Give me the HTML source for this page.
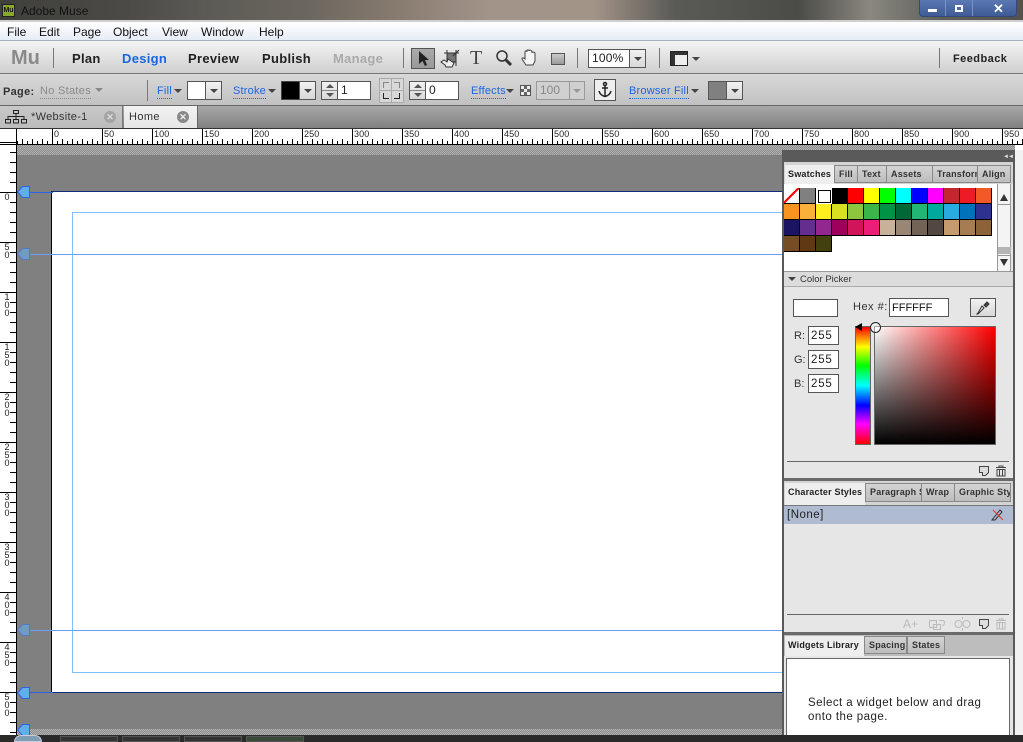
<!DOCTYPE html>
<html><head><meta charset="utf-8"><style>
html,body{margin:0;padding:0;background:#808080}
#r{position:relative;width:1023px;height:742px;overflow:hidden;font-family:"Liberation Sans",sans-serif;font-size:11px;color:#222}
#r div,#r span.a,#r svg{position:absolute;box-sizing:border-box}
.t{white-space:nowrap}
.b{font-weight:bold;font-size:13px;letter-spacing:.3px;top:51px;color:#222}
.lnk{color:#1a66e0;border-bottom:1px dotted #1a66e0;top:85px;line-height:13px;letter-spacing:.2px;white-space:nowrap}
.f{background:#fff;border:1px solid #555}
.dd{background:linear-gradient(#f2f2f2,#d8d8d8);border:1px solid #555}
.tri{width:0;height:0;border-left:4px solid transparent;border-right:4px solid transparent;border-top:4px solid #444}
.up{width:0;height:0;border-left:4px solid transparent;border-right:4px solid transparent;border-bottom:4px solid #555}
.dn{width:0;height:0;border-left:4px solid transparent;border-right:4px solid transparent;border-top:4px solid #555}
.sep{width:1px;background:#777}
.hl{font-size:9px;top:129px;line-height:10px;color:#222;letter-spacing:.1px}
.vl{font-size:9px;left:2px;width:10px;line-height:8px;color:#222;text-align:center}
.tab{background:linear-gradient(#d4d4d4,#bdbdbd);border:1px solid #888;font-size:9px;font-weight:bold;line-height:17px;white-space:nowrap;overflow:hidden;letter-spacing:.2px;padding-left:4px;color:#333}
.on{background:#eee;border-color:#eee;border-bottom:0;color:#222;padding-left:2px}
.s{width:16px;height:16px;border-right:1px solid #000;border-bottom:1px solid #000}
</style></head><body><div id="r">
<!-- title bar -->
<div style="left:0;top:0;width:1023px;height:21px;background:linear-gradient(90deg,#3f3f3b 0,#4b4a46 12%,#5c5a55 20%,#6b675f 30%,#85796d 38%,#a3948a 48%,#a39488 58%,#5a5a56 66%,#4b4b48 78%,#8a887e 85%,#5f5f5c 92%,#55524e 100%)"></div>
<div style="left:0;top:20px;width:1023px;height:2px;background:#cfcfcf"></div>
<div style="left:2px;top:4px;width:13px;height:13px;background:#8aa82a;border:1px solid #222;font-size:7px;line-height:11px;text-align:center;color:#111;font-weight:bold">Mu</div>
<div class="t" style="left:21px;top:4px;font-size:12px;color:#111;line-height:14px">Adobe Muse</div>
<div style="left:919px;top:0;width:98px;height:17px;background:linear-gradient(#5a78b4,#3f5b96);border:1px solid #34487a;border-top:0;border-radius:0 0 4px 4px"></div>
<div style="left:945px;top:0;width:1px;height:16px;background:#7a93c4"></div>
<div style="left:972px;top:0;width:1px;height:16px;background:#7a93c4"></div>
<div style="left:928px;top:9px;width:9px;height:3px;background:#fff"></div>
<div style="left:955px;top:5px;width:8px;height:7px;border:2px solid #fff"></div>
<div class="t" style="left:993px;top:1px;font-size:13px;font-weight:bold;color:#fff;line-height:15px">✕</div>
<!-- menu -->
<div style="left:0;top:22px;width:1023px;height:19px;background:linear-gradient(#fff,#e6ecf6);border-bottom:1px solid #a8b0bc"></div>
<div class="t" style="left:7px;top:25px;font-size:12px;line-height:14px;color:#111">File</div>
<div class="t" style="left:39px;top:25px;font-size:12px;line-height:14px;color:#111">Edit</div>
<div class="t" style="left:73px;top:25px;font-size:12px;line-height:14px;color:#111">Page</div>
<div class="t" style="left:113px;top:25px;font-size:12px;line-height:14px;color:#111">Object</div>
<div class="t" style="left:162px;top:25px;font-size:12px;line-height:14px;color:#111">View</div>
<div class="t" style="left:201px;top:25px;font-size:12px;line-height:14px;color:#111">Window</div>
<div class="t" style="left:259px;top:25px;font-size:12px;line-height:14px;color:#111">Help</div>
<!-- toolbar -->
<div style="left:0;top:41px;width:1023px;height:33px;background:linear-gradient(#f4f4f4,#cfcfcf);border-bottom:1px solid #777"></div>
<div class="t" style="left:11px;top:47px;font-size:20px;font-weight:bold;color:#8a8a8a;line-height:22px">Mu</div>
<div class="sep" style="left:53px;top:48px;height:20px"></div>
<div class="t b" style="left:72px">Plan</div>
<div class="t b" style="left:122px;color:#1a66e0">Design</div>
<div class="t b" style="left:188px">Preview</div>
<div class="t b" style="left:262px">Publish</div>
<div class="t b" style="left:333px;color:#aaa">Manage</div>
<div class="sep" style="left:403px;top:48px;height:20px"></div>
<div style="left:411px;top:48px;width:24px;height:21px;background:linear-gradient(#aaa,#999);border:1px solid #555"></div>
<svg style="left:418px;top:50px" width="12" height="17"><path d="M1 1V14L4.500 11L7 16L9 15L7 10H11Z" fill="#222"/></svg>
<svg style="left:440px;top:49px" width="20" height="20" fill="none" stroke="#333"><rect x="7" y="4" width="9" height="9" fill="#777"/><path d="M4 4H19M16 1V17M7 1V4M19 1L13 7" /><path d="M1 13L5 16L6 18H12L14 14L8 10L7 13L4 11Z" fill="#eee"/></svg>
<div class="t" style="left:470px;top:48px;font-family:'Liberation Serif',serif;font-size:20px;color:#444;line-height:21px">T</div>
<svg style="left:495px;top:49px" width="18" height="18" fill="none" stroke="#333"><circle cx="7" cy="7" r="5" stroke-width="1.500"/><path d="M11 11L16 16" stroke-width="3"/></svg>
<svg style="left:521px;top:49px" width="19" height="19" fill="#f4f4f4" stroke="#444"><path d="M5 16L1 10C1 8 3 9 4 10V3C4 1.500 6 1.500 6 3V2C6 .5 8 .5 8 2V2C8 .5 11 1 11 3V4C11 2.500 14 3 14 4.500V12L12 16Z"/></svg>
<div style="left:551px;top:53px;width:14px;height:12px;background:linear-gradient(#ccc,#999);border:1px solid #555"></div>
<div class="sep" style="left:577px;top:48px;height:20px"></div>
<div class="f" style="left:588px;top:49px;width:42px;height:19px;font-size:12px;line-height:17px;padding-left:3px;letter-spacing:.2px;color:#222">100%</div>
<div class="dd" style="left:629px;top:49px;width:17px;height:19px"></div>
<div class="tri" style="left:634px;top:57px"></div>
<div class="sep" style="left:659px;top:48px;height:20px"></div>
<div style="left:670px;top:51px;width:18px;height:15px;background:#333;border:1px solid #222"></div>
<div style="left:675px;top:55px;width:12px;height:10px;background:#eee"></div>
<div class="tri" style="left:692px;top:57px"></div>
<div class="sep" style="left:939px;top:48px;height:20px"></div>
<div class="t" style="left:953px;top:52px;font-size:11px;font-weight:bold;letter-spacing:.45px;line-height:14px;color:#222">Feedback</div>
<!-- options bar -->
<div style="left:0;top:74px;width:1023px;height:32px;background:linear-gradient(#d8d8d8,#c2c2c2);border-bottom:1px solid #666"></div>
<div class="t" style="left:3px;top:85px;font-weight:bold;letter-spacing:.3px;line-height:14px;color:#333">Page:</div>
<div class="t" style="left:40px;top:85px;color:#8a8a8a;letter-spacing:.3px;line-height:13px;border-bottom:1px dotted #888">No States</div>
<div class="tri" style="left:95px;top:88px;border-top-color:#888"></div>
<div class="sep" style="left:147px;top:80px;height:21px"></div>
<div class="lnk" style="left:157px">Fill</div><div class="tri" style="left:174px;top:89px"></div>
<div class="f" style="left:187px;top:81px;width:19px;height:19px"></div>
<div class="dd" style="left:205px;top:81px;width:17px;height:19px"></div><div class="tri" style="left:210px;top:89px"></div>
<div class="lnk" style="left:233px">Stroke</div><div class="tri" style="left:268px;top:89px"></div>
<div style="left:281px;top:81px;width:19px;height:19px;background:#000;border:1px solid #444"></div>
<div class="dd" style="left:299px;top:81px;width:17px;height:19px"></div><div class="tri" style="left:304px;top:89px"></div>
<div class="dd" style="left:321px;top:81px;width:17px;height:19px"></div>
<div style="left:322px;top:90px;width:15px;height:1px;background:#888"></div>
<div class="up" style="left:326px;top:84px"></div><div class="dn" style="left:326px;top:93px"></div>
<div class="f" style="left:337px;top:81px;width:34px;height:19px;font-size:12px;line-height:17px;padding-left:3px">1</div>
<div style="left:379px;top:78px;width:25px;height:25px;background:linear-gradient(#aaa,#aaa) 11px 0/1px 25px no-repeat,linear-gradient(#aaa,#aaa) 0 11px/25px 1px no-repeat,#d8d8d8;border:1px solid #aaa"></div>
<div style="left:383px;top:82px;width:6px;height:6px;border-left:1px solid #888;border-top:1px solid #888"></div>
<div style="left:394px;top:82px;width:6px;height:6px;border-right:1px solid #888;border-top:1px solid #888"></div>
<div style="left:383px;top:93px;width:6px;height:6px;border-left:1px solid #222;border-bottom:1px solid #222"></div>
<div style="left:394px;top:93px;width:6px;height:6px;border-right:1px solid #222;border-bottom:1px solid #222"></div>
<div class="dd" style="left:409px;top:81px;width:17px;height:19px"></div>
<div style="left:410px;top:90px;width:15px;height:1px;background:#888"></div>
<div class="up" style="left:414px;top:84px"></div><div class="dn" style="left:414px;top:93px"></div>
<div class="f" style="left:425px;top:81px;width:34px;height:19px;font-size:12px;line-height:17px;padding-left:3px">0</div>
<div class="lnk" style="left:471px">Effects</div><div class="tri" style="left:506px;top:89px"></div>
<div style="left:520px;top:85px;width:11px;height:11px;border:1px solid #555;background:repeating-conic-gradient(#666 0 25%,#eee 0 50%) 0 0/6px 6px"></div>
<div style="left:536px;top:81px;width:34px;height:19px;background:#d0d0d0;border:1px solid #999;color:#888;font-size:12px;line-height:17px;padding-left:3px">100</div>
<div style="left:569px;top:81px;width:16px;height:19px;background:#d0d0d0;border:1px solid #999"></div><div class="tri" style="left:573px;top:89px;border-top-color:#999"></div>
<div style="left:594px;top:79px;width:22px;height:22px;background:#eee;border:1px solid #555"></div>
<svg style="left:597px;top:81px" width="16" height="18" fill="none" stroke="#222" stroke-width="1.500"><circle cx="8" cy="3" r="1.500"/><path d="M8 4.500V15M5 7H11M2 10C3 14 6 15 8 15.500C10 15 13 14 14 10"/></svg>
<div class="lnk" style="left:629px">Browser Fill</div><div class="tri" style="left:691px;top:89px"></div>
<div style="left:708px;top:81px;width:19px;height:19px;background:#808080;border:1px solid #555"></div>
<div class="dd" style="left:726px;top:81px;width:17px;height:19px"></div><div class="tri" style="left:731px;top:89px"></div>
<!-- tabs -->
<div style="left:0;top:106px;width:1023px;height:22px;background:linear-gradient(#a8a8a8,#808080)"></div>
<div style="left:0;top:106px;width:123px;height:22px;background:linear-gradient(#c8c8c8,#bcbcbc);border-right:1px solid #777"></div>
<svg style="left:5px;top:110px" width="22" height="14" fill="none" stroke="#222"><rect x="8.500" y=".5" width="5" height="3"/><rect x=".5" y="9.500" width="5" height="3.500"/><rect x="8.500" y="9.500" width="5" height="3.500"/><rect x="16.500" y="9.500" width="5" height="3.500"/><path d="M11 4V9M3 9V6.500H19V9"/></svg>
<div class="t" style="left:31px;top:110px;letter-spacing:.3px;line-height:14px;color:#333">*Website-1</div>
<div style="left:104px;top:111px;width:12px;height:12px;border-radius:50%;background:#a4a4a4;color:#ddd;font-size:9px;line-height:12px;text-align:center;font-weight:bold">✕</div>
<div style="left:124px;top:106px;width:73px;height:22px;background:linear-gradient(#f2f2f2,#e6e6e6)"></div>
<div class="t" style="left:129px;top:110px;letter-spacing:.4px;line-height:14px;color:#333">Home</div>
<div style="left:177px;top:111px;width:12px;height:12px;border-radius:50%;background:#888;color:#eee;font-size:9px;line-height:12px;text-align:center;font-weight:bold">✕</div>
<div style="left:197px;top:106px;width:1px;height:22px;background:#666"></div>
<div style="left:0;top:128px;width:1023px;height:1px;background:#333"></div>
<!-- horizontal ruler -->
<div style="left:0;top:129px;width:1023px;height:15px;background:#fff"></div>
<div style="left:2px;top:139px;width:1021px;height:5px;background:repeating-linear-gradient(90deg,#000 0 1px,transparent 1px 10px)"></div>
<div style="left:7px;top:141px;width:1016px;height:3px;background:repeating-linear-gradient(90deg,#000 0 1px,transparent 1px 10px)"></div>
<div style="left:2px;top:129px;width:1021px;height:15px;background:repeating-linear-gradient(90deg,#000 0 1px,transparent 1px 50px)"></div>
<div style="left:0;top:129px;width:16px;height:15px;background:#fff"></div>
<div style="left:16px;top:129px;width:1px;height:15px;background:#000"></div>
<div class="t hl" style="left:54px">0</div><div class="t hl" style="left:104px">50</div><div class="t hl" style="left:154px">100</div><div class="t hl" style="left:204px">150</div><div class="t hl" style="left:254px">200</div><div class="t hl" style="left:304px">250</div><div class="t hl" style="left:354px">300</div><div class="t hl" style="left:404px">350</div><div class="t hl" style="left:454px">400</div><div class="t hl" style="left:504px">450</div><div class="t hl" style="left:554px">500</div><div class="t hl" style="left:604px">550</div><div class="t hl" style="left:654px">600</div><div class="t hl" style="left:704px">650</div><div class="t hl" style="left:754px">700</div><div class="t hl" style="left:804px">750</div><div class="t hl" style="left:854px">800</div><div class="t hl" style="left:904px">850</div><div class="t hl" style="left:954px">900</div><div class="t hl" style="left:1004px">950</div>
<div style="left:0;top:144px;width:1023px;height:1px;background:#000"></div>
<!-- vertical ruler -->
<div style="left:0;top:145px;width:16px;height:590px;background:#fff"></div>
<div style="left:10px;top:152px;width:6px;height:583px;background:repeating-linear-gradient(#000 0 1px,transparent 1px 10px)"></div>
<div style="left:0;top:142px;width:16px;height:593px;background:repeating-linear-gradient(#000 0 1px,transparent 1px 50px)"></div>
<div class="vl" style="top:193px">0</div>
<div class="vl" style="top:243px">5<br>0</div>
<div class="vl" style="top:293px">1<br>0<br>0</div>
<div class="vl" style="top:343px">1<br>5<br>0</div>
<div class="vl" style="top:393px">2<br>0<br>0</div>
<div class="vl" style="top:443px">2<br>5<br>0</div>
<div class="vl" style="top:493px">3<br>0<br>0</div>
<div class="vl" style="top:543px">3<br>5<br>0</div>
<div class="vl" style="top:593px">4<br>0<br>0</div>
<div class="vl" style="top:643px">4<br>5<br>0</div>
<div class="vl" style="top:693px">5<br>0<br>0</div>
<!-- canvas -->
<div style="left:16px;top:145px;width:1007px;height:590px;background:#808080;border-left:1px solid #000"></div>
<div style="left:17px;top:145px;width:1006px;height:10px;background:repeating-conic-gradient(#8e8e8e 0 25%,#b0b0b0 0 50%) 0 0/2px 2px"></div>
<div style="left:17px;top:729px;width:1006px;height:6px;background:repeating-conic-gradient(#8e8e8e 0 25%,#b0b0b0 0 50%) 0 0/2px 2px"></div>
<!-- page -->
<div style="left:51px;top:191px;width:740px;height:502px;background:#fff;border:1px solid #000;border-top:1px solid #0f2a78;border-bottom:1px solid #0f2a78"></div>
<div style="left:72px;top:212px;width:720px;height:461px;border:1px solid #80bfff"></div>
<div style="left:17px;top:254px;width:770px;height:1px;background:#6a9cf5"></div>
<div style="left:17px;top:630px;width:770px;height:1px;background:#6a9cf5"></div>
<div style="left:17px;top:192px;width:36px;height:1px;background:#2a62e8"></div>
<div style="left:17px;top:692px;width:36px;height:1px;background:#2a62e8"></div>
<svg style="left:17px;top:186px" width="13" height="12"><path d="M.5 6L5.500 .5H12.500V11.500H5.500Z" fill="#62aee8" stroke="#2a62e8"/></svg>
<svg style="left:17px;top:248px" width="13" height="12"><path d="M.5 6L5.500 .5H12.500V11.500H5.500Z" fill="#6f9cc0" stroke="#5878c8"/></svg>
<svg style="left:17px;top:624px" width="13" height="12"><path d="M.5 6L5.500 .5H12.500V11.500H5.500Z" fill="#6f9cc0" stroke="#5878c8"/></svg>
<svg style="left:17px;top:687px" width="13" height="12"><path d="M.5 6L5.500 .5H12.500V11.500H5.500Z" fill="#62aee8" stroke="#2a62e8"/></svg>
<svg style="left:17px;top:724px" width="13" height="12"><path d="M.5 6L5.500 .5H12.500V11.500H5.500Z" fill="#62aee8" stroke="#2a62e8"/></svg>
<!-- panel -->
<div style="left:782px;top:150px;width:233px;height:585px;background:#5a5a5a"></div>
<div style="left:1015px;top:150px;width:8px;height:585px;background:#f2f2f2"></div>
<div style="left:1015px;top:145px;width:8px;height:5px;background:#fff"></div>
<div class="t" style="left:1003px;top:153px;font-size:6px;line-height:8px;color:#ddd;letter-spacing:-1px">◄◄</div>
<div style="left:784px;top:162px;width:229px;height:318px;background:#e6e6e6"></div>
<div style="left:784px;top:162px;width:229px;height:22px;background:#d4d4d4"></div>
<div class="tab on" style="left:785px;top:165px;width:49px;height:19px">Swatches</div>
<div class="tab" style="left:834px;top:165px;width:24px;height:18px">Fill</div>
<div class="tab" style="left:857px;top:165px;width:30px;height:18px">Text</div>
<div class="tab" style="left:886px;top:165px;width:47px;height:18px">Assets</div>
<div class="tab" style="left:932px;top:165px;width:46px;height:18px">Transform</div>
<div class="tab" style="left:977px;top:165px;width:34px;height:18px">Align</div>
<!-- swatches -->
<div style="left:784px;top:184px;width:213px;height:88px;background:#fff"></div>
<div class="s" style="left:784px;top:188px;background:linear-gradient(to top left,#fff 46%,#f00 46% 56%,#fff 56%)"></div>
<div class="s" style="left:800px;top:188px;background:#808080"></div>
<div class="s" style="left:816px;top:188px;background:#fff;border:0"></div><div style="left:818px;top:190px;width:13px;height:13px;border:1px solid #000;background:#fff"></div>
<div class="s" style="left:832px;top:188px;background:#000"></div><div class="s" style="left:848px;top:188px;background:#f00"></div><div class="s" style="left:864px;top:188px;background:#ff0"></div><div class="s" style="left:880px;top:188px;background:#0f0"></div><div class="s" style="left:896px;top:188px;background:#0ff"></div><div class="s" style="left:912px;top:188px;background:#00f"></div><div class="s" style="left:928px;top:188px;background:#f0f"></div><div class="s" style="left:944px;top:188px;background:#c1272d"></div><div class="s" style="left:960px;top:188px;background:#ed1c24"></div><div class="s" style="left:976px;top:188px;background:#f15a24"></div>
<div class="s" style="left:784px;top:204px;background:#f7931e"></div><div class="s" style="left:800px;top:204px;background:#fbb03b"></div><div class="s" style="left:816px;top:204px;background:#fcee21"></div><div class="s" style="left:832px;top:204px;background:#d9e021"></div><div class="s" style="left:848px;top:204px;background:#8cc63f"></div><div class="s" style="left:864px;top:204px;background:#39b54a"></div><div class="s" style="left:880px;top:204px;background:#009245"></div><div class="s" style="left:896px;top:204px;background:#006837"></div><div class="s" style="left:912px;top:204px;background:#22b573"></div><div class="s" style="left:928px;top:204px;background:#00a99d"></div><div class="s" style="left:944px;top:204px;background:#29abe2"></div><div class="s" style="left:960px;top:204px;background:#0071bc"></div><div class="s" style="left:976px;top:204px;background:#2e3192"></div>
<div class="s" style="left:784px;top:220px;background:#1b1464"></div><div class="s" style="left:800px;top:220px;background:#662d91"></div><div class="s" style="left:816px;top:220px;background:#93278f"></div><div class="s" style="left:832px;top:220px;background:#9e005d"></div><div class="s" style="left:848px;top:220px;background:#d4145a"></div><div class="s" style="left:864px;top:220px;background:#ed1e79"></div><div class="s" style="left:880px;top:220px;background:#c7b299"></div><div class="s" style="left:896px;top:220px;background:#998675"></div><div class="s" style="left:912px;top:220px;background:#736357"></div><div class="s" style="left:928px;top:220px;background:#534741"></div><div class="s" style="left:944px;top:220px;background:#c69c6d"></div><div class="s" style="left:960px;top:220px;background:#a67c52"></div><div class="s" style="left:976px;top:220px;background:#8c6239"></div>
<div class="s" style="left:784px;top:236px;background:#754c24"></div><div class="s" style="left:800px;top:236px;background:#603813"></div><div class="s" style="left:816px;top:236px;background:#42400f"></div>
<!-- scrollbar -->
<div style="left:997px;top:184px;width:14px;height:88px;background:#f4f4f4;border-left:1px solid #999;border-right:1px solid #999"></div>
<div style="left:997px;top:204px;width:14px;height:1px;background:#999"></div>
<div style="left:998px;top:247px;width:13px;height:7px;background:#b4b4b4"></div>
<div style="left:997px;top:255px;width:14px;height:1px;background:#999"></div>
<div style="left:1000px;top:194px;border-left:4px solid transparent;border-right:4px solid transparent;border-bottom:7px solid #333"></div>
<div style="left:1000px;top:259px;border-left:4px solid transparent;border-right:4px solid transparent;border-top:7px solid #333"></div>
<!-- color picker -->
<div style="left:784px;top:271px;width:229px;height:16px;background:#dcdcdc;border-top:1px solid #999;border-bottom:1px solid #aaa"></div>
<div class="tri" style="left:788px;top:277px"></div>
<div class="t" style="left:800px;top:273px;font-size:9.500px;letter-spacing:0;line-height:13px;color:#333">Color Picker</div>
<div class="f" style="left:793px;top:299px;width:45px;height:18px"></div>
<div class="t" style="left:853px;top:300px;line-height:14px;letter-spacing:.5px;color:#333">Hex #:</div>
<div class="f" style="left:889px;top:298px;width:60px;height:19px;font-size:11px;line-height:18px;padding-left:2px;color:#111">FFFFFF</div>
<div class="dd" style="left:970px;top:298px;width:26px;height:19px"></div>
<svg style="left:976px;top:300px" width="15" height="15" fill="#eee" stroke="#333"><path d="M2 13L1 14L2 14L8 8L6 6Z"/><path d="M8 5L10 7L13 4L11 2Z" fill="#444"/></svg>
<div class="t" style="left:794px;top:329px;line-height:14px;color:#333">R:</div>
<div class="t" style="left:794px;top:353px;line-height:14px;color:#333">G:</div>
<div class="t" style="left:794px;top:377px;line-height:14px;color:#333">B:</div>
<div class="f" style="left:808px;top:326px;width:31px;height:19px;font-size:11.500px;line-height:18px;padding-left:2px;letter-spacing:.8px">255</div>
<div class="f" style="left:808px;top:350px;width:31px;height:19px;font-size:11.500px;line-height:18px;padding-left:2px;letter-spacing:.8px">255</div>
<div class="f" style="left:808px;top:374px;width:31px;height:19px;font-size:11.500px;line-height:18px;padding-left:2px;letter-spacing:.8px">255</div>
<div style="left:855px;top:326px;width:16px;height:119px;border:1px solid #666;background:linear-gradient(#f00,#ff0 17%,#0f0 33%,#0ff 50%,#00f 67%,#f0f 83%,#f00)"></div>
<div style="left:855px;top:323px;border-top:4px solid transparent;border-bottom:4px solid transparent;border-right:7px solid #000"></div>
<div style="left:874px;top:326px;width:122px;height:119px;border:1px solid #666;background:linear-gradient(transparent,#000),linear-gradient(90deg,#fff,#f00)"></div>
<div style="left:870px;top:322px;width:11px;height:11px;border:1px solid #222;border-radius:50%;background:rgba(255,255,255,.4)"></div>
<div style="left:787px;top:461px;width:222px;height:1px;background:#666"></div>
<svg style="left:978px;top:465px" width="12" height="12" fill="#ddd" stroke="#444"><path d="M1.500 1.500H10.500V7.500L7.500 10.500H4.500V7.500H1.500Z"/></svg>
<svg style="left:995px;top:465px" width="12" height="12" fill="none" stroke="#444"><path d="M1 2.500H11M4 2.500V1H8V2.500M2 4.500H10V11H2ZM4.500 5V10.500M7.500 5V10.500"/></svg>
<div style="left:784px;top:478px;width:229px;height:3px;background:#6a6a6a"></div>
<!-- character styles -->
<div style="left:784px;top:481px;width:229px;height:152px;background:#e6e6e6"></div>
<div style="left:784px;top:481px;width:229px;height:24px;background:#d4d4d4"></div>
<div class="tab on" style="left:785px;top:483px;width:80px;height:22px;line-height:17px">Character Styles</div>
<div class="tab" style="left:865px;top:483px;width:57px;height:19px;line-height:17px">Paragraph Styles</div>
<div class="tab" style="left:921px;top:483px;width:34px;height:19px;line-height:17px">Wrap</div>
<div class="tab" style="left:954px;top:483px;width:57px;height:19px;line-height:17px">Graphic Styles</div>
<div style="left:784px;top:505px;width:229px;height:19px;background:#aebbd0;border-top:1px solid #777"></div>
<div class="t" style="left:787px;top:508px;font-size:11.500px;letter-spacing:.5px;line-height:14px;color:#222">[None]</div>
<svg style="left:990px;top:507px" width="15" height="15" fill="none"><path d="M2 13H5L12 5L10 3Z" stroke="#333"/><path d="M3 3L13 13" stroke="#e33"/></svg>
<div style="left:787px;top:614px;width:222px;height:1px;background:#666"></div>
<div class="t" style="left:903px;top:617px;font-size:12px;line-height:14px;color:#bbb">A+</div>
<svg style="left:929px;top:618px" width="17" height="12" fill="none" stroke="#bbb"><path d="M.5 2.500H7.500V9.500H.5ZM4.500 6.500H11.500V11.500H4.500ZM10 2.500H14C16 2.500 16 7.500 13 7.500"/></svg>
<svg style="left:954px;top:617px" width="17" height="14" fill="none" stroke="#bbb"><rect x="1" y="3.500" width="7" height="7" rx="3.500"/><rect x="9" y="3.500" width="7" height="7" rx="3.500"/><path d="M8.500 0V2.500M8.500 11V14"/></svg>
<svg style="left:978px;top:618px" width="12" height="12" fill="#ddd" stroke="#444"><path d="M1.500 1.500H10.500V7.500L7.500 10.500H4.500V7.500H1.500Z"/></svg>
<svg style="left:995px;top:618px" width="12" height="12" fill="none" stroke="#bbb"><path d="M1 2.500H11M4 2.500V1H8V2.500M2 4.500H10V11H2ZM4.500 5V10.500M7.500 5V10.500"/></svg>
<div style="left:784px;top:632px;width:229px;height:3px;background:#6a6a6a"></div>
<!-- widgets -->
<div style="left:784px;top:635px;width:229px;height:100px;background:#e6e6e6"></div>
<div style="left:784px;top:635px;width:229px;height:21px;background:#bdbdbd"></div>
<div class="tab on" style="left:785px;top:636px;width:79px;height:20px;line-height:17px">Widgets Library</div>
<div class="tab" style="left:864px;top:636px;width:43px;height:18px;line-height:17px">Spacing</div>
<div class="tab" style="left:907px;top:636px;width:38px;height:18px;line-height:17px">States</div>
<div style="left:786px;top:658px;width:224px;height:77px;background:#fff;border:1px solid #666;border-bottom:0"></div>
<div style="left:808px;top:696px;width:190px;font-size:11.500px;line-height:14px;letter-spacing:.45px;color:#222">Select a widget below and drag<br>onto the page.</div>
<!-- taskbar -->
<div style="left:0;top:735px;width:1023px;height:7px;background:#2a2a2a"></div>
<div style="left:14px;top:735px;width:28px;height:7px;border-radius:14px 14px 0 0;background:#7f9db5;border:1px solid #ccd"></div>
<div style="left:60px;top:736px;width:58px;height:6px;background:#333;border:1px solid #555"></div>
<div style="left:122px;top:736px;width:58px;height:6px;background:#333;border:1px solid #555"></div>
<div style="left:184px;top:736px;width:58px;height:6px;background:#333;border:1px solid #555"></div>
<div style="left:246px;top:736px;width:58px;height:6px;background:#3a4a3a;border:1px solid #555"></div>
</div></body></html>
